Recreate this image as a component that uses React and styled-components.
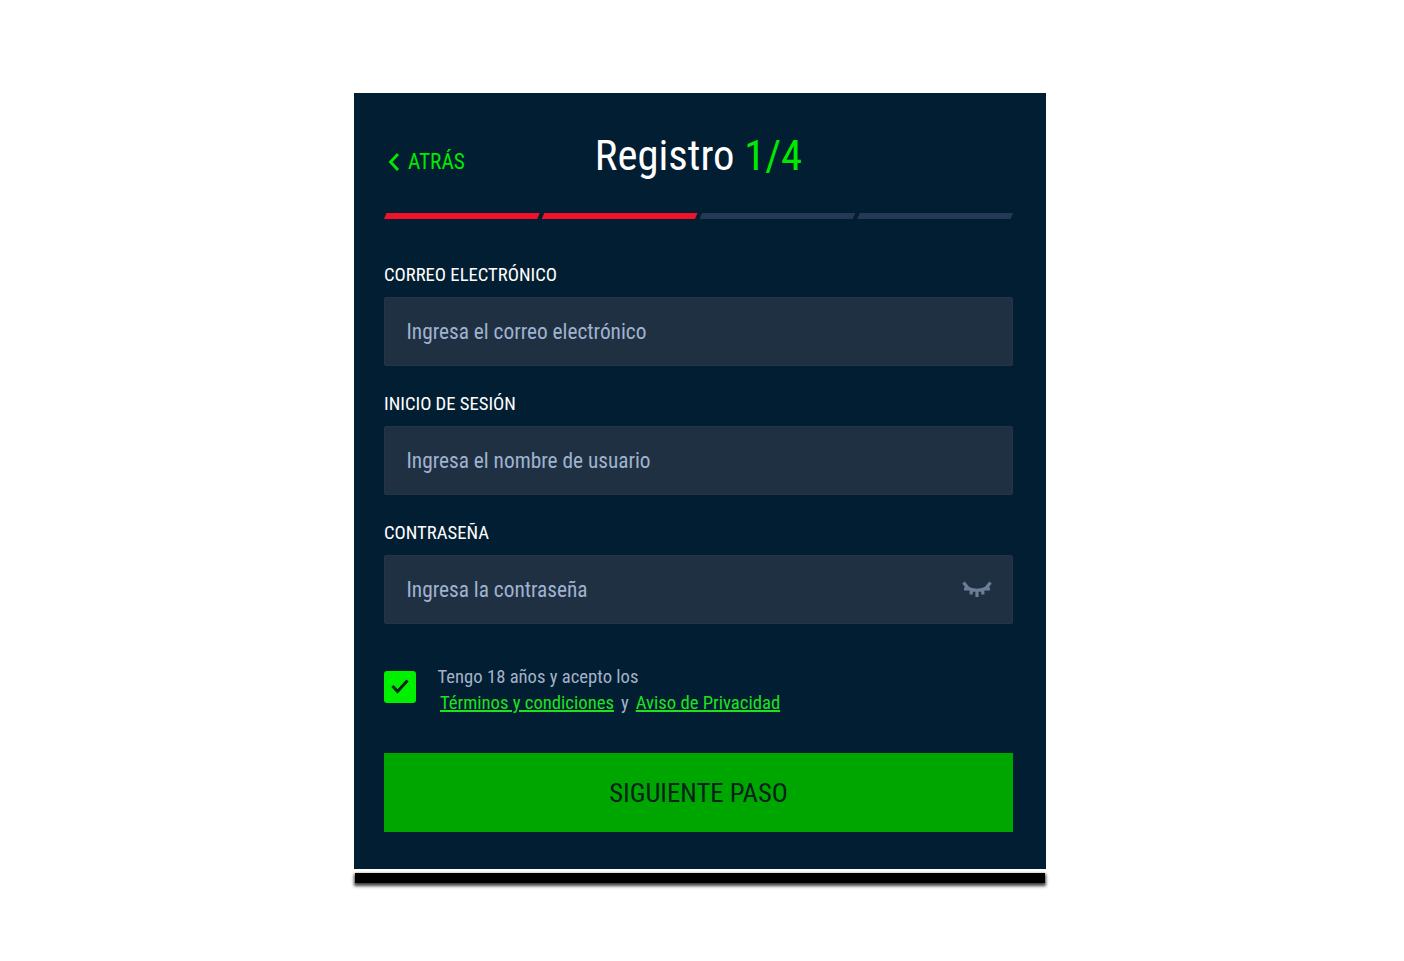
import React from "react";
import styled, { createGlobalStyle } from "styled-components";

const GlobalStyle = createGlobalStyle`
  html, body {
    margin: 0;
    padding: 0;
    background: #fff;
    font-family: "Roboto Condensed", Roboto, "Liberation Sans", sans-serif;
    font-stretch: condensed;
  }
`;

function EyeClosed() {
  return (
    <svg width="30" height="18" viewBox="0 0 30 18" fill="none" stroke="#6b7e97" strokeWidth="3.2">
      <path d="M4 5.5 C9 10.5 21 10.5 26 5.5" />
      <path d="M1.5 1.5 L5.5 6.5 M2 8 L7 8 M9.5 9 L9 13.5 M15 10 L15 16 M20.5 9 L21 13.5 M23 8 L28 8 M24.5 6.5 L28.5 1.5" />
    </svg>
  );
}

function Field({ label, placeholder, eye }) {
  return (
    <FieldWrap>
      <FieldLabel>{label}</FieldLabel>
      <InputBox>
        <Placeholder>{placeholder}</Placeholder>
        {eye && <EyeClosed />}
      </InputBox>
    </FieldWrap>
  );
}

export default function App() {
  return (
    <Page>
      <GlobalStyle />
      <Panel>
        <Header>
          <BackLink>
            <svg width="12" height="20" viewBox="0 0 12 20" fill="none" stroke="#00ea00" strokeWidth="2.8">
              <path d="M10 2 L2.5 10 L10 18" />
            </svg>
            ATRÁS
          </BackLink>
          <Title>
            Registro <span>1/4</span>
          </Title>
        </Header>
        <Progress>
          <Step $done />
          <Step $done />
          <Step />
          <Step />
        </Progress>
        <Field label="CORREO ELECTRÓNICO" placeholder="Ingresa el correo electrónico" />
        <Field label="INICIO DE SESIÓN" placeholder="Ingresa el nombre de usuario" />
        <Field label="CONTRASEÑA" placeholder="Ingresa la contraseña" eye />
        <Terms>
          <CheckBox>
            <svg width="18" height="15" viewBox="0 0 18 15" fill="none" stroke="#04231a" strokeWidth="3">
              <path d="M1.5 7 L6.5 12.5 L16.5 1.5" />
            </svg>
          </CheckBox>
          <TermsText>
            <div>Tengo 18 años y acepto los</div>
            <LinksLine>
              <TermsLink>Términos y condiciones</TermsLink>
              <span>y</span>
              <TermsLink>Aviso de Privacidad</TermsLink>
            </LinksLine>
          </TermsText>
        </Terms>
        <NextButton>SIGUIENTE PASO</NextButton>
      </Panel>
      <ShadowBar />
    </Page>
  );
}

const Page = styled.div`
  box-sizing: border-box;
  width: 692px;
  min-height: 100vh;
  margin-left: 354px;
  padding-top: 93px;
`;

const Panel = styled.div`
  box-sizing: border-box;
  height: 776px;
  background: #021e32;
  padding: 0 33px 0 30px;
`;

const Header = styled.div`
  position: relative;
  height: 120px;
  display: flex;
  align-items: center;
  justify-content: center;
`;

const BackLink = styled.a`
  position: absolute;
  left: 4px;
  top: 56px;
  display: flex;
  align-items: center;
  gap: 8px;
  color: #00ea00;
  font-size: 21.33px;
  line-height: 26px;
`;

const Title = styled.h1`
  margin: 3px 0 0;
  color: #fff;
  font-size: 42.67px;
  font-weight: 400;
  line-height: 50px;

  span {
    color: #00ea00;
  }
`;

const Progress = styled.div`
  display: flex;
  gap: 2px;
  height: 6px;
`;

const Step = styled.div`
  flex: 1;
  background: ${(p) => (p.$done ? "#f0112b" : "#243a54")};
  clip-path: polygon(2.5px 0, 100% 0, calc(100% - 2.5px) 100%, 0 100%);
`;

const FieldWrap = styled.div`
  margin-top: 44px;

  & + & {
    margin-top: 26px;
  }
`;

const FieldLabel = styled.div`
  color: #fff;
  font-size: 18.67px;
  line-height: 24px;
  height: 24px;
  margin-bottom: 10px;
`;

const InputBox = styled.div`
  box-sizing: border-box;
  height: 69px;
  display: flex;
  align-items: center;
  justify-content: space-between;
  padding: 0 20px 0 21.5px;
  background: #1f3042;
  border: 1px solid #24354a;
  border-radius: 2px;
`;

const Placeholder = styled.span`
  color: #9fb3cf;
  font-size: 21.33px;
`;

const Terms = styled.div`
  display: flex;
  align-items: center;
  margin-top: 40px;
`;

const CheckBox = styled.div`
  width: 32px;
  height: 32px;
  margin-bottom: 7px;
  display: flex;
  align-items: center;
  justify-content: center;
  background: #00f000;
  border-radius: 3px;
`;

const TermsText = styled.div`
  margin-left: 21.5px;
  font-size: 18.67px;
  line-height: 26px;
  color: #a4b2c8;
`;

const LinksLine = styled.div`
  display: flex;
  gap: 7px;
  margin-left: 2.5px;
`;

const TermsLink = styled.a`
  color: #1fe21f;
  text-decoration: underline;
  text-decoration-thickness: 1.5px;
`;

const NextButton = styled.button`
  display: block;
  width: 100%;
  height: 79px;
  margin-top: 37px;
  border: 0;
  background: #00a600;
  color: #05221c;
  font-family: inherit;
  font-stretch: inherit;
  font-size: 26.67px;
`;

const ShadowBar = styled.div`
  height: 10px;
  margin: 4px 1px 0;
  background: #000;
  box-shadow: 0 2px 3px 1px rgba(0, 0, 0, 0.75);
`;
